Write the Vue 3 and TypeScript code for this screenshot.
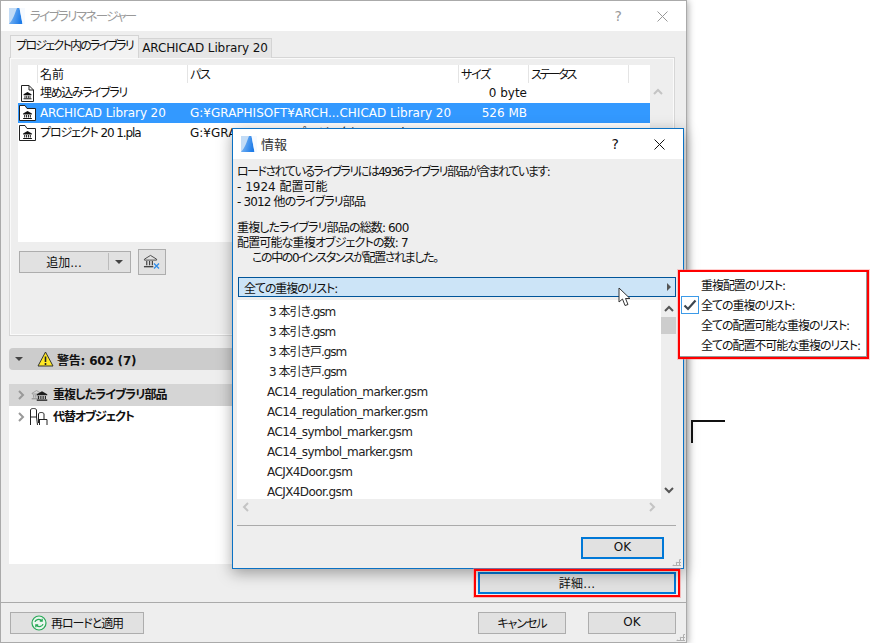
<template>
  <div class="desk">
    <svg class="defs" width="0" height="0">
      <defs>
        <linearGradient id="sail" x1="0" y1="0" x2="1" y2="0.300">
          <stop offset="0" stop-color="#8fc2f7" />
          <stop offset="1" stop-color="#1f7ce8" />
        </linearGradient>
        <symbol id="logo" viewBox="0 0 16 16">
          <rect x="0" y="0" width="16" height="16" fill="#c3dcf6" />
          <path d="M0 16C4 12 6 5 8 0H10.500L13.500 16Z" fill="url(#sail)" />
          <path d="M10.500 0H16V16H13.500Z" fill="#f6faff" />
        </symbol>
        <symbol id="temple" viewBox="0 0 16 16">
          <path d="M8 1.500L15 5.500V7H1V5.500Z" fill="currentColor" />
          <path d="M3.500 8V12M6.500 8V12M9.500 8V12M12.500 8V12" stroke="currentColor" stroke-width="1.500" />
          <path d="M1 13.500H15" stroke="currentColor" stroke-width="1.800" />
        </symbol>
        <symbol id="temple-line" viewBox="0 0 16 16">
          <path d="M8 1.500L14.500 5.500V6.500H1.500V5.500Z" fill="none" stroke="currentColor" />
          <path d="M4 7.500V12M7 7.500V12M10 7.500V12" stroke="currentColor" stroke-width="1.300" />
          <path d="M1 13.500H11" stroke="currentColor" stroke-width="1.500" />
        </symbol>
        <symbol id="chev" viewBox="0 0 10 10">
          <path d="M3 1L7 5L3 9" fill="none" stroke="currentColor" stroke-width="2" />
        </symbol>
      </defs>
    </svg>

    <section class="win">
      <header class="title title--idle">
        <svg class="title__logo"><use href="#logo" /></svg>
        <span class="title__text title__text--main">ライブラリマネージャー</span>
        <span class="title__help">?</span>
        <svg class="title__close" viewBox="0 0 11 11"><path d="M0.500 0.500L10.500 10.500M10.500 0.500L0.500 10.500" stroke="currentColor" fill="none" /></svg>
      </header>

      <div class="tabs">
        <div class="tab tab--on">プロジェクト内のライブラリ</div>
        <div class="tab">ARCHICAD Library 20</div>
      </div>

      <div class="panel">
        <div class="listwrap">
          <div class="list">
            <div class="lrow lrow--head">
              <span></span>
              <span>名前</span>
              <span class="kana">パス</span>
              <span class="kana">サイズ</span>
              <span class="kana kana--status">ステータス</span>
              <span></span>
            </div>
            <div
              v-for="lib in libraries"
              :key="lib.name"
              class="lrow"
              :class="{ 'lrow--sel': lib.selected }"
            >
              <span class="lrow__icon">
                <svg v-if="lib.kind === 'file'" width="13" height="17" viewBox="0 0 13 17">
                  <path d="M0.500 0.500H8L12.500 5V16.500H0.500Z" fill="#fff" stroke="#222" />
                  <path d="M8 0.500V5H12.500" fill="none" stroke="#222" />
                  <use href="#temple" x="2" y="6" width="9" height="9.500" color="#111" />
                </svg>
                <svg v-else width="17" height="16" viewBox="0 0 17 16">
                  <path d="M0.500 15.500V0.500H6L8 3.500H16.500V15.500Z" fill="#fff" stroke="#222" />
                  <use href="#temple" x="3.500" y="5" width="10" height="10" color="#111" />
                </svg>
              </span>
              <span :class="lib.nameClass">{{ lib.name }}</span>
              <span>{{ lib.path }}</span>
              <span class="lrow__size">{{ lib.size }}</span>
              <span></span>
              <span></span>
            </div>
          </div>
          <div class="vscroll">
            <svg class="chev chev--up"><use href="#chev" /></svg>
          </div>
        </div>

        <div class="addrow">
          <div class="btn addbtn">
            <span class="addbtn__label">追加...</span>
            <span class="addbtn__arrow"></span>
          </div>
          <div class="btn iconbtn">
            <svg width="18" height="18" viewBox="0 0 18 18">
              <use href="#temple-line" x="0" y="1" width="15" height="15" color="#444" />
              <path d="M11 10.500L16 15.500M16 10.500L11 15.500" stroke="#2f8ce8" stroke-width="1.300" />
            </svg>
          </div>
        </div>
      </div>

      <div class="warn">
        <span class="warn__arrow"></span>
        <svg class="warn__icon" width="17" height="16" viewBox="0 0 17 16">
          <path d="M8.500 1L16 15H1Z" fill="#fde725" stroke="#333" stroke-linejoin="round" />
          <path d="M8.500 5.500V11M8.500 12V14" stroke="#222" stroke-width="1.600" />
        </svg>
        <span class="warn__text">警告: 602 (7)</span>
      </div>

      <div class="tree">
        <div class="tree__row tree__row--on">
          <svg class="tree__chev"><use href="#chev" /></svg>
          <svg class="tree__icon" viewBox="0 0 18 18">
            <use href="#temple-line" x="1" y="3" width="11" height="12" color="#8a8a8a" />
            <use href="#temple" x="6" y="4" width="12" height="12" color="#1c1c1c" />
          </svg>
          <span class="tree__label">重複したライブラリ部品</span>
        </div>
        <div class="tree__row">
          <svg class="tree__chev"><use href="#chev" /></svg>
          <svg class="tree__icon" viewBox="0 0 18 18">
            <path d="M0.500 17V2C0.500 0 6.500 0 6.500 2V9H1M6.500 9L7.500 17" fill="none" stroke="#222" />
            <path d="M8.500 15V6C8.500 4 14 4 14 6V11.500H8.500M17 11.500V17M14 11.500H17M9.500 11.500V17" fill="none" stroke="#222" />
          </svg>
          <span class="tree__label tree__label--alt">代替オブジェクト</span>
        </div>
      </div>

      <div class="detailrow">
        <div class="btn btn--focus detailbtn">詳細...</div>
      </div>

      <div class="foot">
        <div class="btn reloadbtn">
          <svg width="16" height="16" viewBox="0 0 16 16">
            <circle cx="8" cy="8" r="7" fill="#eaf6ee" stroke="#27a857" stroke-width="1.200" />
            <path d="M4 7C4.500 4.500 8 3.500 10.500 5.500M8.800 6.200H11.200V3.800M12 9C11.500 11.500 8 12.500 5.500 10.500M7.200 9.800H4.800V12.200" fill="none" stroke="#27a857" stroke-width="1.200" />
          </svg>
          <span class="reloadbtn__text">再ロードと適用</span>
        </div>
        <div class="foot__right">
          <div class="btn footbtn footbtn--cancel">キャンセル</div>
          <div class="btn footbtn">OK</div>
        </div>
      </div>
      <span class="grip grip--main"></span>
    </section>

    <section class="dlg">
      <header class="title">
        <svg class="title__logo"><use href="#logo" /></svg>
        <span class="title__text title__text--dark">情報</span>
        <span class="title__help">?</span>
        <svg class="title__close" viewBox="0 0 11 11"><path d="M0.500 0.500L10.500 10.500M10.500 0.500L0.500 10.500" stroke="currentColor" fill="none" /></svg>
      </header>
      <div class="dlg__body">
        <div class="info">
          <p class="fit-c">ロードされているライブラリには4936ライブラリ部品が含まれています:</p>
          <p>- 1924 配置可能</p>
          <p class="fit-a">- 3012 他のライブラリ部品</p>
          <p class="info__gap fit-a">重複したライブラリ部品の総数: 600</p>
          <p class="fit-a">配置可能な重複オブジェクトの数: 7</p>
          <p class="info__indent fit-b">この中の0インスタンスが配置されました。</p>
        </div>

        <div class="combo">
          <span>全ての重複のリスト:</span>
          <span class="combo__arrow"></span>
        </div>

        <div class="files">
          <ul class="files__list">
            <li v-for="(file, index) in files" :key="index" :class="{ 'files__wide': file.startsWith('3') }">{{ file }}</li>
          </ul>
          <div class="files__scroll">
            <svg class="chev chev--up chev--dark"><use href="#chev" /></svg>
            <div class="files__thumb"></div>
            <svg class="chev chev--down chev--dark"><use href="#chev" /></svg>
          </div>
        </div>
        <div class="hscroll">
          <svg class="chev chev--left"><use href="#chev" /></svg>
          <svg class="chev chev--right"><use href="#chev" /></svg>
        </div>
        <div class="dlg__sep"></div>
        <div class="dlg__foot">
          <div class="btn btn--focus dlg__ok">OK</div>
        </div>
      </div>
      <span class="grip grip--dlg"></span>
    </section>

    <div class="menu">
      <div v-for="item in menuItems" :key="item.label" class="menu__item">
        <span class="menu__check" :class="{ 'menu__check--on': item.checked }">
          <svg v-if="item.checked" width="14" height="12" viewBox="0 0 14 12">
            <path d="M1.500 6.500L5 10L12.500 1.500" fill="none" stroke="#3c4650" stroke-width="2.200" />
          </svg>
        </span>
        <span class="menu__label">{{ item.label }}</span>
      </div>
    </div>

    <div class="redbox"></div>
    <div class="corner"></div>

    <svg class="cursor" width="15" height="20" viewBox="0 0 15 20">
      <path d="M1 1V15L4.500 12L7 18.500L10 17.500L7.500 11.500H12Z" fill="#fff" stroke="#333" stroke-width="1" stroke-linejoin="round" />
    </svg>
  </div>
</template>

<script setup lang="ts">
interface Library {
  name: string;
  nameClass: string;
  path: string;
  size: string;
  kind: "file" | "folder";
  selected?: boolean;
}

const libraries: Library[] = [
  { name: "埋め込みライブラリ", nameClass: "fit-b", path: "", size: "0 byte", kind: "file" },
  {
    name: "ARCHICAD Library 20",
    nameClass: "fit-latin",
    path: "G:¥GRAPHISOFT¥ARCH...CHICAD Library 20",
    size: "526 MB",
    kind: "folder",
    selected: true,
  },
  {
    name: "プロジェクト 20 1.pla",
    nameClass: "fit-d",
    path: "G:¥GRAPHISOFT¥プロジェクト 20 1.pla",
    size: "",
    kind: "folder",
  },
];

const files = [
  "3 本引き.gsm",
  "3 本引き.gsm",
  "3 本引き戸.gsm",
  "3 本引き戸.gsm",
  "AC14_regulation_marker.gsm",
  "AC14_regulation_marker.gsm",
  "AC14_symbol_marker.gsm",
  "AC14_symbol_marker.gsm",
  "ACJX4Door.gsm",
  "ACJX4Door.gsm",
];

const menuItems = [
  { label: "重複配置のリスト:", checked: false },
  { label: "全ての重複のリスト:", checked: true },
  { label: "全ての配置可能な重複のリスト:", checked: false },
  { label: "全ての配置不可能な重複のリスト:", checked: false },
];
</script>

<style>
html,
body {
  margin: 0;
  background: #fff;
}
</style>

<style scoped>
.desk {
  position: relative;
  width: 870px;
  height: 643px;
  overflow: hidden;
  background: #fff;
  color: #111;
  font-family: "DejaVu Sans", "Noto Sans CJK JP", sans-serif;
  font-size: 12px;
  font-feature-settings: "palt";
}

.defs {
  position: absolute;
}

/* kana in the reference font runs narrower than Noto's, so lines get fitted */
.fit-a {
  letter-spacing: -0.85px;
}

.fit-b {
  letter-spacing: -1.4px;
}

.fit-c {
  letter-spacing: -1.5px;
}

.fit-d {
  letter-spacing: -1.1px;
}

.fit-latin {
  letter-spacing: -0.1px;
}

.win {
  position: absolute;
  left: 0;
  top: 0;
  box-sizing: border-box;
  width: 687px;
  height: 643px;
  border: 1px solid #aaa;
  background: #eee;
  box-shadow: 1px 1px 7px rgba(0, 0, 0, 0.35);
}

.title {
  display: flex;
  align-items: center;
  height: 30px;
  padding: 0 18px 0 8px;
  background: #fff;
  color: #111;
}

.title--idle {
  color: #999;
}

.title__logo {
  width: 16px;
  height: 16px;
  flex: none;
}

.title__text {
  margin-left: 5px;
  padding-bottom: 2px;
  font-size: 13px;
}

.title__text--main {
  font-size: 12.5px;
  letter-spacing: -1.6px;
}

.title__help {
  margin-left: auto;
  font-size: 14px;
}

.title__close {
  width: 11px;
  height: 11px;
  margin-left: 35px;
}

.tabs {
  display: flex;
  align-items: flex-end;
  height: 23px;
  margin: 4px 0 -1px 9px;
  position: relative;
  z-index: 1;
}

.tab {
  box-sizing: border-box;
  width: 134px;
  height: 20px;
  margin-left: -1px;
  border: 1px solid #d4d4d4;
  border-bottom: 0;
  background: #e6e6e6;
  line-height: 19px;
  text-align: center;
  white-space: nowrap;
  letter-spacing: -0.1px;
}

.tab--on {
  width: 129px;
  height: 23px;
  margin-left: 0;
  background: #f2f2f2;
  line-height: 21px;
  letter-spacing: -1.75px;
}

.panel {
  box-sizing: border-box;
  width: 666px;
  height: 279px;
  margin-left: 8px;
  padding: 7px 0 0 8px;
  border: 1px solid #d6d6d6;
  box-shadow: inset 0 0 0 1px #fafafa;
}

.listwrap {
  display: flex;
}

.list {
  width: 632px;
  height: 177px;
  background: #fff;
}

.lrow {
  display: grid;
  grid-template-columns: 19px 150px 271px 70px 100px 22px;
  height: 20px;
  line-height: 20px;
  white-space: nowrap;
}

.lrow > span {
  overflow: hidden;
  padding-left: 3px;
}

.lrow > span.lrow__icon {
  display: flex;
  align-items: center;
  justify-content: center;
  overflow: visible;
  padding: 0;
}

.lrow--head {
  height: 18px;
  line-height: 21px;
}

.lrow--head > span {
  border-left: 1px solid #e4e4e4;
  padding-left: 2px;
}

.lrow--head > span:first-child {
  border-left: 0;
}

.lrow--head > span.kana {
  letter-spacing: -1.2px;
}

.lrow--head > span.kana--status {
  letter-spacing: -2.1px;
}

.lrow--sel {
  background: #3399ff;
  color: #fff;
}

.lrow > span.lrow__size {
  padding-right: 1px;
  text-align: right;
}

.vscroll {
  width: 16px;
  padding-top: 22px;
  color: #c4c4c4;
}

.chev {
  display: block;
  width: 10px;
  height: 10px;
  color: #c4c4c4;
}

.chev--dark {
  color: #555;
}

.chev--up {
  transform: rotate(-90deg);
  margin-left: 3px;
}

.chev--down {
  transform: rotate(90deg);
  margin-left: 3px;
}

.chev--left {
  transform: rotate(180deg);
}

.btn {
  box-sizing: border-box;
  display: flex;
  align-items: center;
  justify-content: center;
  height: 22px;
  padding-bottom: 2px;
  border: 1px solid #adadad;
  background: #e1e1e1;
}

.btn--focus {
  border: 2px solid #0078d7;
}

.addrow {
  display: flex;
  align-items: center;
  gap: 7px;
  height: 26px;
  margin: 7px 0 0 1px;
}

.addbtn {
  width: 112px;
  padding-bottom: 0;
  justify-content: flex-start;
}

.addbtn__label {
  width: 88px;
  margin-top: -1px;
  border-right: 1px solid #bbb;
  text-align: center;
}

.addbtn__arrow {
  width: 0;
  height: 0;
  margin-left: 6px;
  border: 4px solid transparent;
  border-top: 4px solid #444;
  border-bottom: 0;
}

.iconbtn {
  width: 28px;
  height: 26px;
  padding-bottom: 0;
}

.warn {
  display: flex;
  align-items: center;
  width: 666px;
  height: 22px;
  margin: 12px 0 0 8px;
  border-radius: 4px;
  background: #ccc;
  font-weight: 700;
}

.warn__arrow {
  width: 0;
  height: 0;
  margin-left: 6px;
  border: 4px solid transparent;
  border-top: 4px solid #444;
  border-bottom: 0;
}

.warn__icon {
  margin: 0 3px 0 14px;
}

.warn__text {
  letter-spacing: -0.2px;
}

.tree {
  width: 666px;
  height: 180px;
  margin: 14px 0 0 8px;
  background: #fff;
  font-weight: 700;
}

.tree__row {
  display: flex;
  align-items: center;
  height: 22px;
}

.tree__row--on {
  background: #d5d5d5;
}

.tree__chev {
  width: 10px;
  height: 10px;
  margin-left: 7px;
  color: #999;
}

.tree__icon {
  width: 18px;
  height: 18px;
  margin: 0 5px 0 4px;
}

.tree__label {
  padding-bottom: 3px;
  letter-spacing: -0.95px;
}

.tree__label--alt {
  letter-spacing: -1.1px;
}

.detailrow {
  display: flex;
  justify-content: flex-end;
  margin-top: 8px;
  padding-right: 10px;
}

.detailbtn {
  width: 198px;
  letter-spacing: 0.2px;
}

.foot {
  display: flex;
  justify-content: space-between;
  margin-top: 8px;
  padding: 9px 10px 0 9px;
  border-top: 1px solid #aaa;
}

.reloadbtn {
  gap: 4px;
  width: 134px;
  padding-bottom: 0;
}

.reloadbtn__text {
  padding-bottom: 2px;
  letter-spacing: -1.1px;
}

.foot__right {
  display: flex;
  gap: 22px;
}

.footbtn {
  width: 88px;
}

.footbtn--cancel {
  letter-spacing: -1px;
}

.grip {
  position: absolute;
  width: 9px;
  height: 8px;
  background-image: radial-gradient(circle, #b0b0b0 1px, transparent 1.200px);
  background-size: 3px 3px;
  clip-path: polygon(100% 0, 100% 100%, 0 100%);
}

.grip--main {
  right: 1px;
  bottom: 1px;
}

.grip--dlg {
  right: 2px;
  bottom: 2px;
}

.dlg {
  position: absolute;
  left: 232px;
  top: 128px;
  box-sizing: border-box;
  width: 452px;
  height: 441px;
  border: 1px solid #0a71c4;
  background: #eee;
  box-shadow: 0 4px 14px rgba(0, 0, 0, 0.35);
}

.title__text--dark {
  font-size: 13px;
  color: #333;
}

.dlg .title__text--dark {
  margin-left: 4px;
}

.dlg__body {
  padding: 6px 0 0 4px;
}

.info p {
  margin: 0;
  height: 15px;
  line-height: 15px;
  white-space: nowrap;
}

.info p.info__gap {
  margin-top: 11px;
}

.info p.info__indent {
  padding-left: 15px;
}

.combo {
  box-sizing: border-box;
  display: flex;
  align-items: center;
  justify-content: space-between;
  width: 438px;
  height: 20px;
  margin: 11px 0 3px 1px;
  padding: 0 4px 0 5px;
  border: 1px solid #005499;
  background: #cce4f7;
  letter-spacing: -1.1px;
}

.combo__arrow {
  width: 0;
  height: 0;
  border: 4px solid transparent;
  border-left: 4px solid #555;
  border-right: 0;
}

.files {
  display: flex;
  height: 199px;
}

.files__list {
  width: 424px;
  margin: 0;
  padding: 2px 0 0 30px;
  box-sizing: border-box;
  overflow: hidden;
  background: #fff;
  list-style: none;
}

.files__list li {
  height: 20px;
  line-height: 20px;
  color: #222;
  letter-spacing: -0.58px;
}

.files__list li.files__wide {
  padding-left: 2px;
  letter-spacing: -1px;
}

.files__scroll {
  display: flex;
  flex-direction: column;
  width: 15px;
  padding-top: 4px;
}

.files__thumb {
  height: 17px;
  margin-top: 3px;
  background: #cdcdcd;
}

.files__scroll .chev--down {
  margin-top: auto;
  margin-bottom: 4px;
}

.hscroll {
  display: flex;
  justify-content: space-between;
  box-sizing: border-box;
  width: 424px;
  height: 16px;
  padding: 3px 4px;
}

.dlg__sep {
  width: 439px;
  height: 1px;
  margin-top: 10px;
  background: #aaa;
}

.dlg__foot {
  display: flex;
  justify-content: flex-end;
  width: 427px;
  margin-top: 11px;
}

.dlg__ok {
  width: 83px;
}

.menu {
  position: absolute;
  left: 678px;
  top: 270px;
  box-sizing: border-box;
  width: 191px;
  height: 89px;
  padding-top: 3px;
  border: 2px solid #f00;
  background: #fff;
  box-shadow: inset -1px -1px 0 #999, 0 0 0 1px rgba(255, 120, 120, 0.35);
}

.menu__item {
  display: flex;
  align-items: center;
  height: 20px;
  white-space: nowrap;
}

.menu__label {
  padding-bottom: 1px;
  letter-spacing: -1.05px;
}

.menu__check {
  box-sizing: border-box;
  display: flex;
  align-items: center;
  justify-content: center;
  flex: none;
  width: 18px;
  height: 18px;
  margin: 0 2px 0 1px;
  border: 1px solid transparent;
}

.menu__check--on {
  border-color: #3c9ae8;
}

.redbox {
  position: absolute;
  left: 474px;
  top: 569px;
  box-sizing: border-box;
  width: 206px;
  height: 28px;
  border: 2px solid #f00;
  box-shadow: 0 0 0 1px rgba(255, 120, 120, 0.45);
}

.corner {
  position: absolute;
  left: 691px;
  top: 420px;
  width: 32px;
  height: 21px;
  border-top: 2px solid #111;
  border-left: 2px solid #111;
}

.cursor {
  position: absolute;
  left: 618px;
  top: 287px;
}
</style>
